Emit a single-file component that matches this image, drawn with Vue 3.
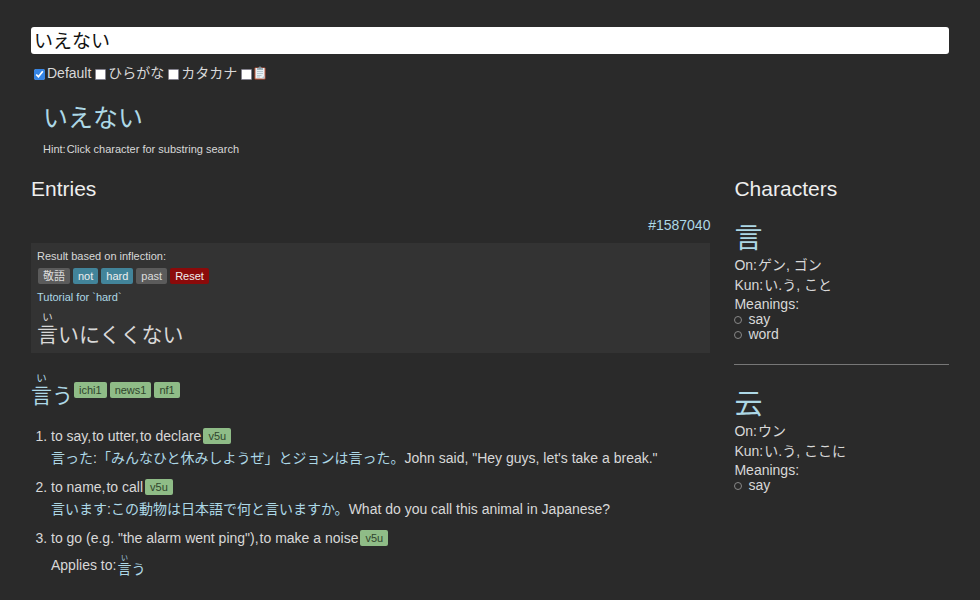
<script setup>
import { ref } from 'vue'

const query = ref('いえない')

const modes = ref([
  { id: 'default', label: 'Default', on: true },
  { id: 'hiragana', label: 'ひらがな', on: false },
  { id: 'katakana', label: 'カタカナ', on: false },
  { id: 'clipboard', label: '', on: false },
])

const inflections = ref([
  { label: '敬語', on: false },
  { label: 'not', on: true },
  { label: 'hard', on: true },
  { label: 'past', on: false },
])

const tags = ['ichi1', 'news1', 'nf1']

const senses = [
  {
    glosses: ['to say', 'to utter', 'to declare'],
    pos: 'v5u',
    example: { form: '言った', ja: '「みんなひと休みしようぜ」とジョンは言った。', en: 'John said, "Hey guys, let\'s take a break."' },
  },
  {
    glosses: ['to name', 'to call'],
    pos: 'v5u',
    example: { form: '言います', ja: 'この動物は日本語で何と言いますか。', en: 'What do you call this animal in Japanese?' },
  },
  { glosses: ['to go (e.g. "the alarm went ping")', 'to make a noise'], pos: 'v5u', applies: true },
]

const characters = [
  { literal: '言', on: 'ゲン, ゴン', kun: 'い.う, こと', meanings: ['say', 'word'] },
  { literal: '云', on: 'ウン', kun: 'い.う, ここに', meanings: ['say'] },
]

function reset() {
  inflections.value.forEach((i) => { i.on = false })
}
</script>

<template>
  <div class="page">
    <header>
      <input v-model="query" class="search" type="text" aria-label="Search" />
      <div class="modes">
        <label v-for="m in modes" :key="m.id" class="mode">
          <input v-model="m.on" type="checkbox" :aria-label="m.label || 'Clipboard'" />
          <span v-if="m.label">{{ m.label }}</span>
          <svg v-else class="clipboard" viewBox="0 0 24 28" aria-hidden="true">
            <rect x="1" y="3" width="22" height="24" rx="2" fill="#c4573a" />
            <path d="M3 4h18v21H3z" fill="#e9f1f5" />
            <path d="M15 25l6-6v6z" fill="#b4c5ce" />
            <path d="M6 11h12M6 15h12M6 19h9M6 22h6" stroke="#a3b5c0" stroke-width="1.4" />
            <path d="M6 8V4h3a3 3 0 0 1 6 0h3v4z" fill="#9fb2bc" />
            <circle cx="12" cy="3.6" r="1.2" fill="#37474f" />
          </svg>
        </label>
      </div>
    </header>

    <section class="query">
      <div class="query-text"><a v-for="(c, i) in query" :key="i" href="#">{{ c }}</a></div>
      <p class="hint"><span>Hint:</span><span>Click character for substring search</span></p>
    </section>

    <div class="columns">
      <main>
        <h2>Entries</h2>
        <div class="entry-id"><a href="#1587040">#1587040</a></div>

        <section class="inflection">
          <p class="small">Result based on inflection:</p>
          <div class="forms">
            <button v-for="f in inflections" :key="f.label" type="button" class="form" :class="{ active: f.on }" @click="f.on = !f.on">{{ f.label }}</button>
            <button type="button" class="form reset" @click="reset">Reset</button>
          </div>
          <p class="small"><a href="#hard">Tutorial for `hard`</a></p>
          <p class="word"><ruby>言<rt>い</rt></ruby>いにくくない</p>
        </section>

        <div class="headword">
          <a class="word" href="#"><ruby>言<rt>い</rt></ruby>う</a>
          <span class="tags"><span v-for="t in tags" :key="t" class="tag">{{ t }}</span></span>
        </div>

        <ol class="senses">
          <li v-for="(s, i) in senses" :key="i">
            <div class="sense">
              <span class="glosses"><span v-for="(g, j) in s.glosses" :key="g">{{ g }}{{ j < s.glosses.length - 1 ? ',' : '' }}</span></span>
              <span class="tag">{{ s.pos }}</span>
            </div>
            <div v-if="s.example" class="example">
              <a href="#">{{ s.example.form }}</a><span>:</span><a href="#">{{ s.example.ja }}</a><span>{{ s.example.en }}</span>
            </div>
            <div v-if="s.applies" class="applies">
              <span>Applies to:</span>
              <a href="#"><ruby>言<rt>い</rt></ruby>う</a>
            </div>
          </li>
        </ol>
      </main>

      <aside>
        <h2>Characters</h2>
        <section v-for="c in characters" :key="c.literal" class="character">
          <a class="literal" href="#">{{ c.literal }}</a>
          <p class="reading"><span>On:</span><span>{{ c.on }}</span></p>
          <p class="reading"><span>Kun:</span><span>{{ c.kun }}</span></p>
          <p class="meanings-title">Meanings:</p>
          <ul>
            <li v-for="m in c.meanings" :key="m">{{ m }}</li>
          </ul>
        </section>
      </aside>
    </div>
  </div>
</template>

<style>
body {
  background: #2a2a2a;
}
</style>

<style scoped>
.page {
  padding: 27px 31px 16px;
  color: #d8d8d8;
  font-family: "Liberation Sans", "Noto Sans CJK JP", sans-serif;
  font-size: 14px;
  line-height: 20px;
}
.page * {
  box-sizing: border-box;
}
p, h2, ul, ol {
  margin: 0;
  padding: 0;
}
a {
  color: #add8e6;
  text-decoration: none;
}
button, input {
  font-family: inherit;
}
.search {
  display: block;
  width: 100%;
  height: 27px;
  padding: 0 3px 2px;
  border: 0;
  border-radius: 3px;
  background: #fff;
  color: #111;
  font-size: 19px;
}
.modes {
  display: flex;
  gap: 4px;
  height: 20px;
  margin: 9px 3px 0;
}
.mode {
  display: flex;
  align-items: center;
  gap: 2px;
}
.mode input {
  width: 11px;
  height: 11px;
  margin: 2px 0 0;
  accent-color: #3584e4;
}
.mode input:not(:checked) {
  appearance: none;
  border: 1px solid #85838f;
  border-radius: 1px;
  background: #fff;
}
.clipboard {
  width: 12px;
  height: 14px;
}
.query {
  padding: 13px 12px 0;
}
.query-text {
  height: 44px;
  font-size: 25px;
  line-height: 44px;
}
.hint {
  display: flex;
  gap: 1px;
  font-size: 11px;
  line-height: 18px;
}
.columns {
  display: grid;
  grid-template-columns: 19fr 6fr;
  gap: 24px;
  padding-top: 18px;
}
main, aside {
  min-width: 0;
}
h2 {
  font-size: 21px;
  font-weight: 400;
  line-height: 26px;
  color: #eee;
}
.entry-id {
  padding-top: 13px;
  text-align: right;
}
.inflection {
  margin-top: 8px;
  padding: 5px 6px 2px;
  background: #333;
}
.small {
  font-size: 11px;
  line-height: 17px;
}
.forms {
  display: flex;
  gap: 3px;
  padding: 3px 1px 5px;
}
.form {
  height: 16px;
  padding: 0 5px;
  border: 0;
  border-radius: 2px;
  background: #5b5b5b;
  color: #ddd;
  font-size: 11px;
  line-height: 16px;
}
.form.active {
  background: #42849a;
  color: #eee;
}
.form.reset {
  background: #8b0a0a;
  color: #eee;
}
.word {
  font-size: 21px;
  line-height: 32px;
}
p.word {
  padding-top: 13px;
}
rt {
  font-size: 50%;
  line-height: 1;
}
.headword {
  display: flex;
  align-items: flex-start;
  gap: 1px;
  padding-top: 19px;
}
.tags {
  display: flex;
  gap: 3px;
  padding-top: 10px;
}
.tag {
  height: 16px;
  padding: 0 5px;
  border-radius: 2px;
  background: #8fbc87;
  color: #30452c;
  font-size: 11px;
  line-height: 16px;
}
.senses {
  padding: 13px 0 0 20px;
}
.senses li {
  padding-bottom: 7px;
  line-height: 22px;
}
.sense {
  display: inline-flex;
  align-items: center;
  gap: 2px;
  height: 22px;
  vertical-align: top;
}
.glosses {
  display: flex;
  gap: 1px;
}
.applies {
  display: flex;
  gap: 1px;
  padding-top: 5px;
}
.literal {
  display: block;
  font-size: 28px;
  line-height: 33px;
}
.character {
  padding-top: 20px;
}
.character + .character {
  margin-top: 22px;
  border-top: 1px solid #777;
  padding-top: 23px;
}
.reading {
  display: flex;
  gap: 1px;
}
.meanings-title {
  padding-top: 2px;
  line-height: 15px;
}
ul {
  list-style: none;
  line-height: 15px;
}
ul li {
  display: flex;
  align-items: center;
  gap: 6px;
}
ul li::before {
  content: "";
  width: 6px;
  height: 6px;
  border: 1px solid #888;
  border-radius: 50%;
}
</style>
